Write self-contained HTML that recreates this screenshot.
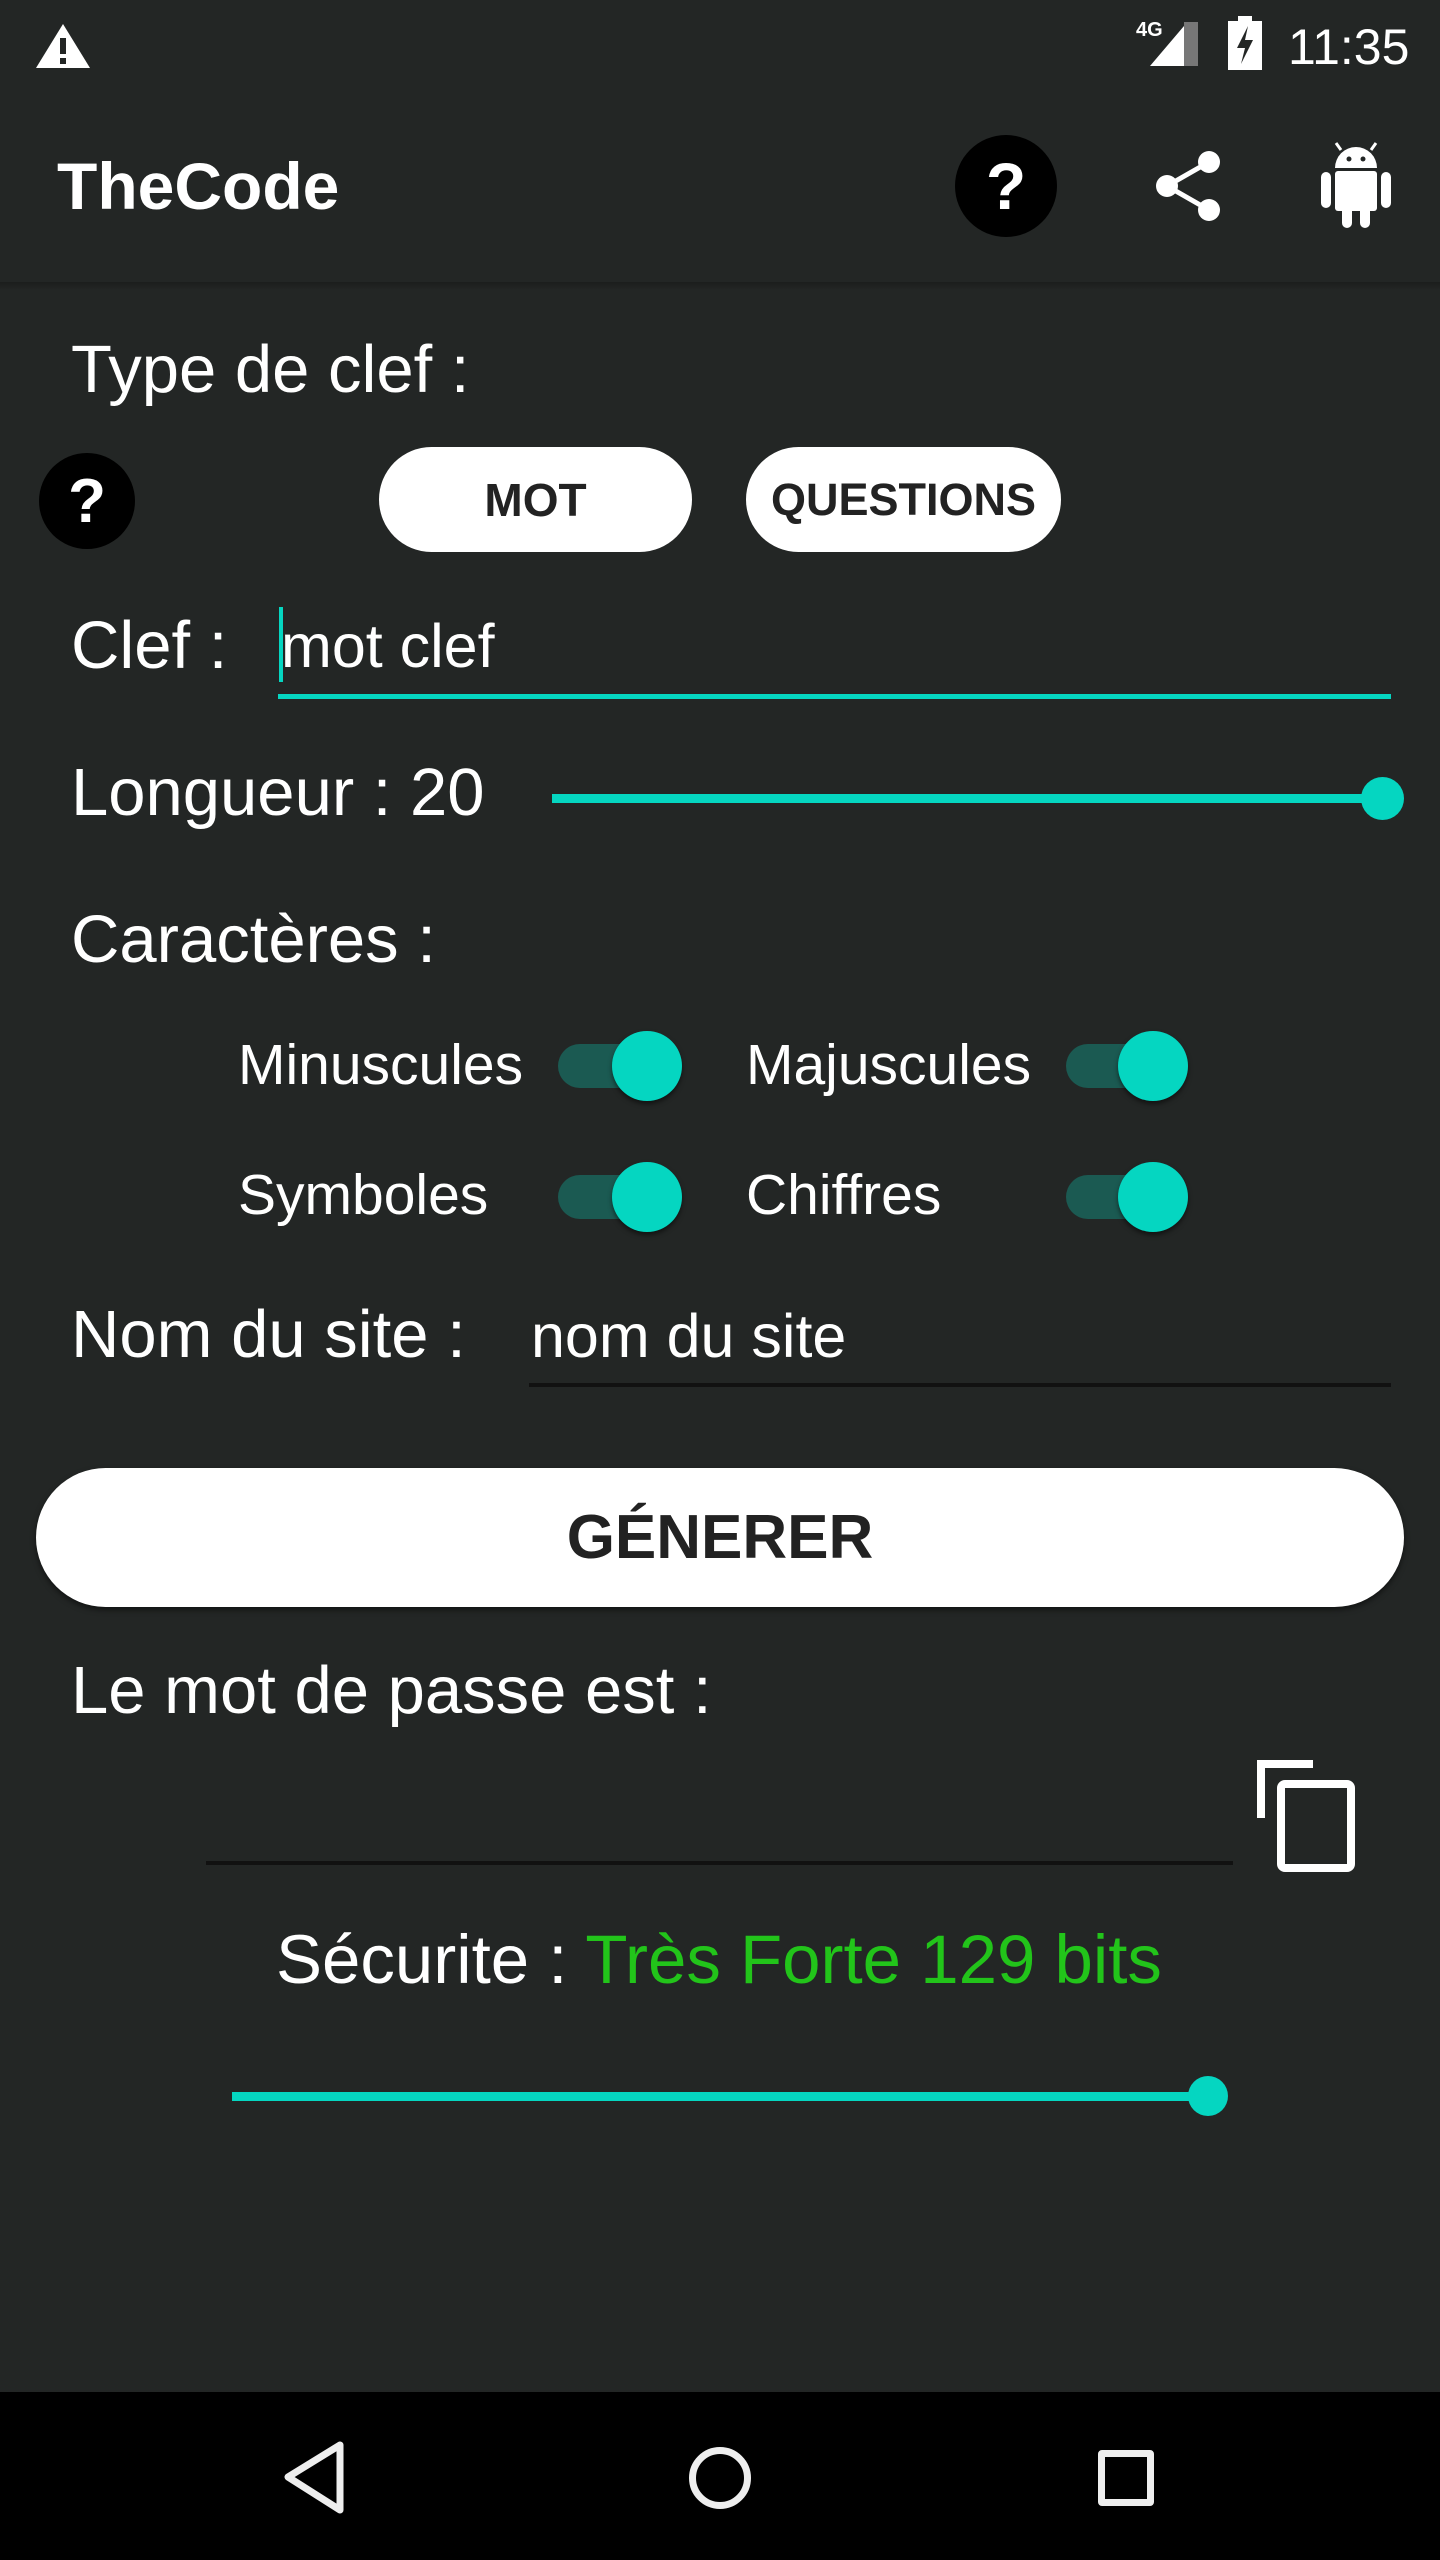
<!DOCTYPE html>
<html><head><meta charset="utf-8"><style>
*{margin:0;padding:0;box-sizing:border-box}
body{width:1440px;height:2560px;background:#232625;font-family:"Liberation Sans",sans-serif;color:#fff;position:relative;overflow:hidden}
.a{position:absolute;white-space:nowrap;line-height:1}
.btn{position:absolute;background:#fff;border-radius:60px;color:#222;font-weight:bold;display:flex;align-items:center;justify-content:center}
.track{position:absolute;width:115px;height:44px;border-radius:22px;background:#1b5a52}
.thumb{position:absolute;width:70px;height:70px;border-radius:50%;background:#05d6c1;box-shadow:0 3px 5px rgba(0,0,0,.5)}
.q{position:absolute;border-radius:50%;background:#000;color:#fff;font-weight:bold;display:flex;align-items:center;justify-content:center}
</style></head><body>
<!-- status bar -->
<svg class="a" style="left:34px;top:22px" width="58" height="48" viewBox="0 0 58 48"><path d="M29 2 L56 46 L2 46 Z" fill="#fff"/><rect x="26" y="16" width="6" height="16" fill="#232625"/><rect x="26" y="36" width="6" height="6" fill="#232625"/></svg>
<div class="a" style="left:1136px;top:20px;font-size:20px;font-weight:bold">4G</div>
<svg class="a" style="left:1148px;top:20px" width="52" height="48"><path d="M2 46 L36 6 L36 46 Z" fill="#fff"/><path d="M36 2 L50 2 L50 46 L36 46 Z" fill="#777"/></svg>
<svg class="a" style="left:1228px;top:16px" width="34" height="54"><rect x="10" y="0" width="14" height="6" fill="#fff"/><rect x="0" y="5" width="34" height="49" fill="#fff"/><path d="M20 10 L9 32 L17 32 L13 48 L25 24 L17 24 Z" fill="#232625"/></svg>
<div class="a" style="left:1288px;top:22px;font-size:50px">11:35</div>
<!-- app bar -->
<div class="a" style="left:0;top:282px;width:1440px;height:8px;background:linear-gradient(#1b1d1c,#232625)"></div>
<div class="a" style="left:57px;top:153px;font-size:66px;font-weight:bold">TheCode</div>
<div class="q" style="left:955px;top:135px;width:102px;height:102px;font-size:66px">?</div>
<svg class="a" style="left:1150px;top:146px" width="80" height="80" viewBox="1150 146 80 80"><circle cx="1167" cy="186" r="11" fill="#fff"/><circle cx="1209" cy="162" r="11" fill="#fff"/><circle cx="1209" cy="210" r="11" fill="#fff"/><path d="M1167 186 L1209 162 M1167 186 L1209 210" stroke="#fff" stroke-width="5"/></svg>
<svg class="a" style="left:1315px;top:140px" width="85" height="95" viewBox="1315 140 85 95"><path d="M1335 168 A21 21 0 0 1 1377 168 Z" fill="#fff"/><path d="M1341 150 L1336 143 M1371 150 L1376 143" stroke="#fff" stroke-width="3"/><circle cx="1349" cy="159" r="2.5" fill="#232625"/><circle cx="1363" cy="159" r="2.5" fill="#232625"/><rect x="1335" y="171" width="42" height="40" rx="3" fill="#fff"/><rect x="1321" y="172" width="10" height="36" rx="5" fill="#fff"/><rect x="1381" y="172" width="10" height="36" rx="5" fill="#fff"/><rect x="1342" y="200" width="10" height="28" rx="5" fill="#fff"/><rect x="1360" y="200" width="10" height="28" rx="5" fill="#fff"/></svg>
<!-- type de clef -->
<div class="a" style="left:71px;top:336px;font-size:67px">Type de clef :</div>
<div class="q" style="left:39px;top:453px;width:96px;height:96px;font-size:62px">?</div>
<div class="btn" style="left:379px;top:447px;width:313px;height:105px;font-size:46px">MOT</div>
<div class="btn" style="left:746px;top:447px;width:315px;height:105px;font-size:45px">QUESTIONS</div>
<!-- clef -->
<div class="a" style="left:71px;top:612px;font-size:67px">Clef :</div>
<div class="a" style="left:279px;top:607px;width:4px;height:75px;background:#05d6c1"></div>
<div class="a" style="left:281px;top:616px;font-size:61px">mot clef</div>
<div class="a" style="left:278px;top:694px;width:1113px;height:5px;background:#05d6c1"></div>
<!-- longueur -->
<div class="a" style="left:71px;top:759px;font-size:67px">Longueur : 20</div>
<div class="a" style="left:552px;top:794px;width:831px;height:9px;background:#05d6c1"></div>
<div class="a" style="left:1361px;top:777px;width:43px;height:43px;border-radius:50%;background:#05d6c1"></div>
<!-- caracteres -->
<div class="a" style="left:71px;top:906px;font-size:67px">Caractères :</div>
<div class="a" style="left:238px;top:1037px;font-size:57px">Minuscules</div>
<div class="track" style="left:558px;top:1044px"></div><div class="thumb" style="left:612px;top:1031px"></div>
<div class="a" style="left:746px;top:1037px;font-size:57px">Majuscules</div>
<div class="track" style="left:1066px;top:1044px"></div><div class="thumb" style="left:1118px;top:1031px"></div>
<div class="a" style="left:238px;top:1167px;font-size:57px">Symboles</div>
<div class="track" style="left:558px;top:1175px"></div><div class="thumb" style="left:612px;top:1162px"></div>
<div class="a" style="left:746px;top:1167px;font-size:57px">Chiffres</div>
<div class="track" style="left:1066px;top:1175px"></div><div class="thumb" style="left:1118px;top:1162px"></div>
<!-- nom du site -->
<div class="a" style="left:71px;top:1301px;font-size:67px">Nom du site :</div>
<div class="a" style="left:531px;top:1306px;font-size:61px">nom du site</div>
<div class="a" style="left:529px;top:1383px;width:862px;height:4px;background:#111"></div>
<!-- generer -->
<div class="btn" style="left:36px;top:1468px;width:1368px;height:139px;font-size:62px;border-radius:70px;box-shadow:0 3px 6px rgba(0,0,0,.5)">GÉNERER</div>
<div class="a" style="left:71px;top:1657px;font-size:67px">Le mot de passe est :</div>
<div class="a" style="left:206px;top:1861px;width:1027px;height:4px;background:#111"></div>
<svg class="a" style="left:1255px;top:1758px" width="104" height="116"><path d="M6 60 L6 6 L58 6" stroke="#fff" stroke-width="8" fill="none"/><rect x="26" y="26" width="70" height="84" rx="4" stroke="#fff" stroke-width="8" fill="none"/></svg>
<!-- securite -->
<div class="a" style="left:276px;top:1925px;font-size:69px">Sécurite : <span style="color:#22c41a">Très Forte 129 bits</span></div>
<div class="a" style="left:232px;top:2092px;width:976px;height:9px;background:#05d6c1"></div>
<div class="a" style="left:1188px;top:2076px;width:40px;height:40px;border-radius:50%;background:#05d6c1"></div>
<!-- nav bar -->
<div class="a" style="left:0;top:2392px;width:1440px;height:168px;background:#000"></div>
<svg class="a" style="left:280px;top:2440px" width="72" height="76"><path d="M60 5 L60 70 L8 37 Z" stroke="#eee" stroke-width="7" fill="none" stroke-linejoin="round"/></svg>
<div class="a" style="left:689px;top:2447px;width:62px;height:62px;border-radius:50%;border:7px solid #eee"></div>
<div class="a" style="left:1098px;top:2450px;width:56px;height:56px;border-radius:4px;border:7px solid #eee"></div>
</body></html>
